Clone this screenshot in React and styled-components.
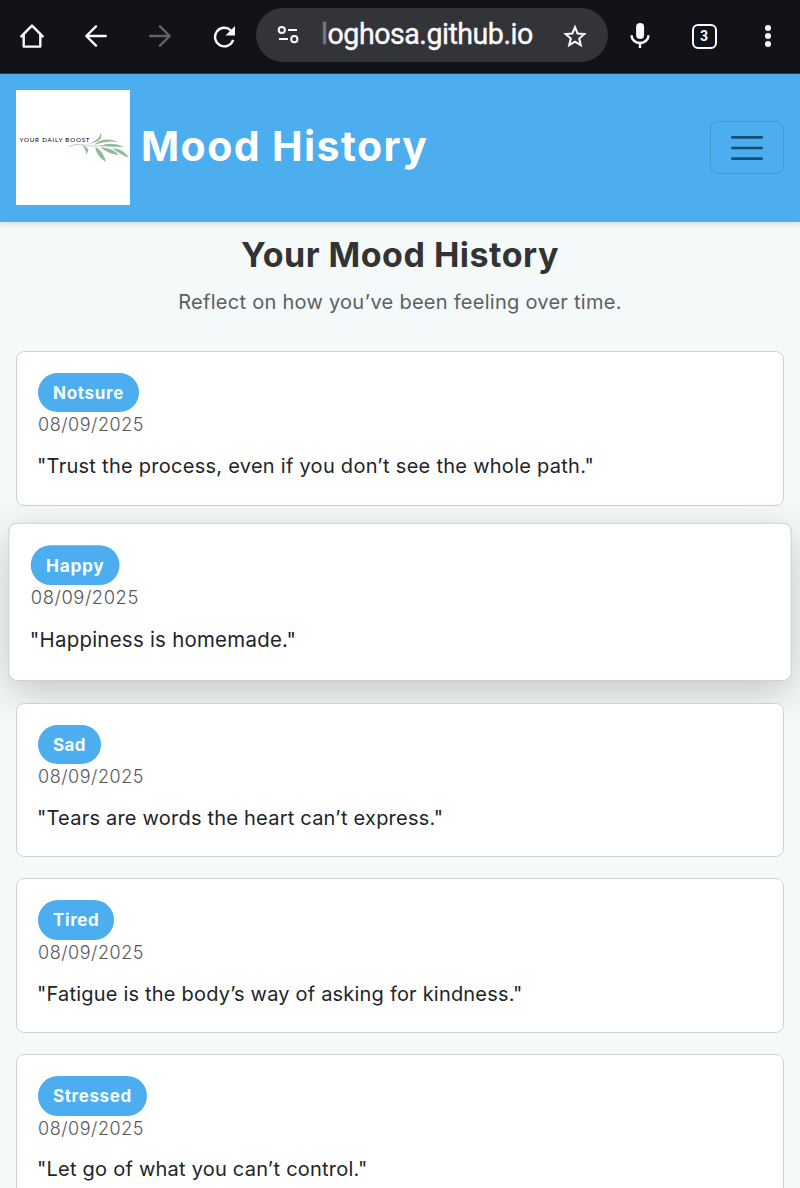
import React from "react";
import styled, { createGlobalStyle, css } from "styled-components";

const Global = createGlobalStyle`
  *, *::before, *::after { box-sizing: border-box; }
  html, body { margin: 0; height: 1188px; overflow: hidden; background: #f4f9f9; }
  body { font-family: Inter, "Liberation Sans", sans-serif; color: #212529; }
`;

const Page = styled.div`
  height: 1188px;
  overflow: hidden;
  display: flex;
  flex-direction: column;
  background: #f4f9f9;
`;

const BrowserBar = styled.div`
  flex: none;
  height: 74px;
  display: flex;
  align-items: flex-start;
  background: #121318;
  border-bottom: 1px solid #1d3c52;
`;

const ToolButton = styled.div`
  width: 64px;
  height: 72px;
  display: flex;
  align-items: center;
  justify-content: center;
  color: ${(p) => (p.$dim ? "#626267" : "#fbf9ff")};
`;

const AddressBar = styled.div`
  width: 352px;
  height: 54px;
  margin-top: 8px;
  padding: 0 20px;
  display: flex;
  align-items: center;
  border-radius: 27px;
  background: #333438;
  color: #fbf9ff;
`;

const AddressText = styled.div`
  flex: 1;
  margin-left: 21px;
  font: 400 28.6px/52px Roboto, sans-serif;
  padding-bottom: 2px;
  -webkit-text-stroke: 0.4px currentColor;
  letter-spacing: ${(p) => p.$track}px;
  white-space: nowrap;
`;

const FadedLetter = styled.span`
  opacity: 0.35;
`;

const TabCount = styled.div`
  width: 25px;
  height: 25px;
  border: 2.5px solid #fbf9ff;
  border-radius: 6px;
  font: 700 14px/20px Roboto, sans-serif;
  text-align: center;
`;

const Header = styled.header`
  position: relative;
  flex: none;
  height: 148px;
  padding: 0 16px 1px;
  display: flex;
  align-items: center;
  background: #4cadef;
  box-shadow: 0 2px 6px rgba(0, 0, 0, 0.12);
`;

const Logo = styled.svg`
  display: block;
  width: 114px;
  height: 115px;
  background: #fff;
`;

const Brand = styled.div`
  flex: 1;
  margin-left: 11px;
  padding-bottom: 3px;
  font-size: 41px;
  font-weight: 700;
  line-height: 50px;
  letter-spacing: ${(p) => p.$track}px;
  color: #fff;
  white-space: nowrap;
`;

const MenuButton = styled.button`
  width: 74px;
  height: 53px;
  padding: 0;
  display: flex;
  align-items: center;
  justify-content: center;
  background: transparent;
  border: 1px solid #4199d4;
  border-radius: 8px;
  color: #174e73;
`;

const Main = styled.main`
  padding: 12px 16px 0;
`;

const Title = styled.h1`
  margin: 0;
  font-size: 34px;
  font-weight: 700;
  line-height: 42px;
  letter-spacing: ${(p) => p.$track}px;
  text-align: center;
  color: #333;
  white-space: nowrap;
`;

const Subtitle = styled.p`
  margin: 11px 0 34px;
  font-size: 20px;
  line-height: 30px;
  letter-spacing: ${(p) => p.$track}px;
  text-align: center;
  color: #5b6063;
  white-space: nowrap;
`;

const CardList = styled.div`
  display: flex;
  flex-direction: column;
  gap: 21.3px;
`;

const Card = styled.article`
  height: 154.5px;
  padding: 21px;
  background: #fff;
  border: 1px solid #ced2d2;
  border-radius: 8px;
  ${(p) =>
    p.$raised &&
    css`
      transform: translateY(-2.6px) scale(1.02);
      box-shadow: 0 11px 40px rgba(0, 0, 0, 0.2);
    `}
`;

const StackedCard = styled(Card)`
  position: relative;
`;

const Pill = styled.div`
  width: fit-content;
  height: 39.4px;
  padding: 0 15px;
  border-radius: 20px;
  background: #4cadef;
  color: #f4ffff;
  font-size: 17px;
  font-weight: 700;
  line-height: 40px;
  letter-spacing: ${(p) => p.$track}px;
  white-space: nowrap;
`;

const DateLine = styled.div`
  font-size: 18px;
  font-weight: 350;
  line-height: 26.6px;
  letter-spacing: ${(p) => p.$track}px;
  color: #54585b;
`;

const Quote = styled.p`
  margin: 12.2px 0 0 -1px;
  font-size: 20px;
  line-height: 31px;
  letter-spacing: ${(p) => p.$track}px;
  color: #212529;
  white-space: nowrap;
`;

const moods = [
  { mood: "Notsure", pillTrack: 0.7, quote: "\"Trust the process, even if you don’t see the whole path.\"", track: 0.27 },
  { mood: "Happy", pillTrack: 0.65, quote: "\"Happiness is homemade.\"", track: 0.26, raised: true },
  { mood: "Sad", pillTrack: 0.35, quote: "\"Tears are words the heart can’t express.\"", track: 0.22 },
  { mood: "Tired", pillTrack: 0.6, quote: "\"Fatigue is the body’s way of asking for kindness.\"", track: 0.2 },
  { mood: "Stressed", pillTrack: 0.62, quote: "\"Let go of what you can’t control.\"", track: 0.23 },
];

const line = { fill: "none", stroke: "currentColor", strokeWidth: 2.4, strokeLinecap: "round", strokeLinejoin: "round" };

const HomeIcon = () => (
  <svg width="26" height="26" viewBox="0 0 26 26" {...line}>
    <path d="M2.300 13.400 13 2.600l10.700 10.800M4.700 12v11.600h16.600V12" />
  </svg>
);

const ArrowIcon = ({ flip }) => (
  <svg width="24" height="24" viewBox="0 0 24 24" {...line}>
    <path d={flip ? "M2.300 12h19.200M12 2.400l9.700 9.600L12 21.600" : "M21.700 12H2.500M12 2.400 2.300 12l9.700 9.600"} />
  </svg>
);

const ReloadIcon = () => (
  <svg width="24" height="24" viewBox="0 0 24 24" {...line} strokeLinecap="butt">
    <path d="M21.200 15.600A9.300 9.300 0 1 1 18.800 6" transform="translate(0 .3)" />
    <path d="M23 2v9.500h-9.500z" fill="currentColor" stroke="none" />
  </svg>
);

const TuneIcon = () => (
  <svg width="24" height="20" viewBox="0 0 24 20" {...line} strokeWidth="2" strokeLinecap="butt">
    <circle cx="5.800" cy="5" r="3.100" />
    <path d="M12 5h9M3 14h9" />
    <circle cx="18.300" cy="14.200" r="3.100" />
  </svg>
);

const StarIcon = () => (
  <svg width="26" height="26" viewBox="0 0 26 26" {...line} strokeWidth="2" strokeLinejoin="miter">
    <path d="m13 5.200 2.600 6.300 6.700.600-5.100 4.400 1.600 6.700-5.800-3.600-5.800 3.600 1.600-6.700-5.100-4.400 6.700-.600z" />
  </svg>
);

const MicIcon = () => (
  <svg width="22" height="28" viewBox="0 0 22 28" {...line} strokeLinecap="butt">
    <rect x="7.100" y="1" width="8" height="16" rx="4" fill="currentColor" stroke="none" />
    <path d="M2.500 13.300c0 4.300 3.800 7.700 8.500 7.700s8.500-3.400 8.500-7.700M11 20.800V26" />
  </svg>
);

const DotsIcon = () => (
  <svg width="8" height="24" viewBox="0 0 8 24" fill="currentColor">
    <circle cx="4" cy="4" r="3" />
    <circle cx="4" cy="12" r="3" />
    <circle cx="4" cy="20" r="3" />
  </svg>
);

const BrandLogo = () => (
  <Logo viewBox="0 0 114 115">
    <path d="M52 56.500Q60 53 68 55Q82 57 90 55" fill="none" stroke="#a9c9ad" strokeWidth=".8" />
    <g fill="#92ba99">
      <path d="M71 54Q82 52 85 43Q88 52 71 54Z" />
      <path d="M66 55Q76 59 70 64Q70 59 66 55Z" />
      <path d="M79 57Q87 60 90 72Q81 67 79 57Z" />
      <path d="M78 55Q88 46 102 52Q90 50 78 55Z" />
      <path d="M84 56Q96 51 108 57Q96 57 84 56Z" />
      <path d="M84 57Q97 58 103 65Q92 64 84 57Z" />
      <path d="M96 58Q108 59 113 68Q105 65 96 58Z" />
    </g>
    <text x="3.500" y="52" fontFamily="Lato, sans-serif" fontSize="6.200" textLength="70" fill="#000">
      YOUR DAILY BOOST
    </text>
  </Logo>
);

export default function App() {
  return (
    <Page>
      <Global />
      <BrowserBar>
        <ToolButton><HomeIcon /></ToolButton>
        <ToolButton><ArrowIcon /></ToolButton>
        <ToolButton $dim><ArrowIcon flip /></ToolButton>
        <ToolButton><ReloadIcon /></ToolButton>
        <AddressBar>
          <TuneIcon />
          <AddressText $track={-0.48}><FadedLetter>l</FadedLetter>oghosa.github.io</AddressText>
          <StarIcon />
        </AddressBar>
        <ToolButton><MicIcon /></ToolButton>
        <ToolButton><TabCount>3</TabCount></ToolButton>
        <ToolButton><DotsIcon /></ToolButton>
      </BrowserBar>
      <Header>
        <BrandLogo />
        <Brand $track={1.4}>Mood History</Brand>
        <MenuButton aria-label="Menu">
          <svg width="32" height="26" viewBox="0 0 32 26" stroke="currentColor" strokeWidth="2.600" strokeLinecap="round">
            <path d="M1.300 2.400h29.400M1.300 13h29.400M1.300 23.600h29.400" />
          </svg>
        </MenuButton>
      </Header>
      <Main>
        <Title $track={0.5}>Your Mood History</Title>
        <Subtitle $track={0.27}>Reflect on how you’ve been feeling over time.</Subtitle>
        <CardList>
          {moods.map((m) => {
            const Item = m.raised ? Card : StackedCard;
            return (
              <Item key={m.mood} $raised={m.raised}>
                <Pill $track={m.pillTrack}>{m.mood}</Pill>
                <DateLine $track={0.55}>08/09/2025</DateLine>
                <Quote $track={m.track}>{m.quote}</Quote>
              </Item>
            );
          })}
        </CardList>
      </Main>
    </Page>
  );
}
